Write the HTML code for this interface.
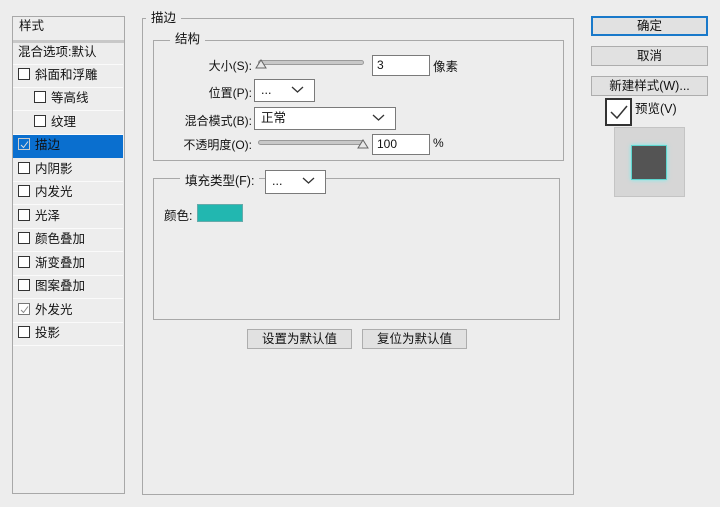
<!DOCTYPE html>
<html><head><meta charset="utf-8"><style>
*{box-sizing:border-box;margin:0;padding:0}
body{width:720px;height:507px;background:#ededed;position:relative;overflow:hidden;font-family:"Liberation Sans","Microsoft YaHei","Noto Sans CJK SC",sans-serif;font-size:12.5px;color:#111}
.a{position:absolute}
.box{position:absolute;border:1px solid #a8a8a8}
.row{position:absolute;left:13px;width:110px;height:23px;border-bottom:1px solid #fafafa;line-height:21px;padding-left:5px;white-space:nowrap}
.cb{display:inline-block;width:12px;height:12px;border:1px solid #333;background:#fff;vertical-align:-1px;margin-right:5px;position:relative}
.lbl{position:absolute;background:#ededed;padding:0 5px;line-height:16px}
.inp{position:absolute;background:#fff;border:1px solid #7a7a7a;height:21px;line-height:19px;padding-left:4px;font-size:12px}
.dd{position:absolute;background:#fff;border:1px solid #7a7a7a;height:23px;line-height:21px;padding-left:6px}
.chev{position:absolute;right:10px;top:5px}
.btn{position:absolute;background:#e1e1e1;border:1px solid #adadad;text-align:center;line-height:18px;height:20px}
.sl{position:absolute;height:5px;background:#c8c8c8;border:1px solid #9a9a9a;border-radius:3px}
</style></head><body>
<div class="box" style="left:12px;top:16px;width:113px;height:478px;background:#ededed"></div>
<div class="a" style="left:19px;top:17px;line-height:18px">样式</div>
<div class="a" style="left:13px;top:40px;width:111px;height:3px;background:#c8c8c8"></div>
<div class="row" style="top:42px">混合选项:默认</div>
<div class="row" style="top:65px"><span class="cb"></span>斜面和浮雕</div>
<div class="row" style="top:88px;padding-left:21px"><span class="cb"></span>等高线</div>
<div class="row" style="top:112px;padding-left:21px"><span class="cb"></span>纹理</div>
<div class="row" style="top:135px;background:#0a6fcf;color:#111;border-bottom:none"><span class="cb" style="background:#0a6fcf;border-color:#ccc"><svg class="a" style="left:1px;top:1px" width="9" height="9"><path d="M1 5 L3.5 7.5 L8 1.5" stroke="#ddd" fill="none" stroke-width="1"/></svg></span>描边</div>
<div class="row" style="top:159px"><span class="cb"></span>内阴影</div>
<div class="row" style="top:182px"><span class="cb"></span>内发光</div>
<div class="row" style="top:206px"><span class="cb"></span>光泽</div>
<div class="row" style="top:229px"><span class="cb"></span>颜色叠加</div>
<div class="row" style="top:253px"><span class="cb"></span>渐变叠加</div>
<div class="row" style="top:276px"><span class="cb"></span>图案叠加</div>
<div class="row" style="top:300px"><span class="cb" style="border-color:#777"><svg class="a" style="left:1px;top:1px" width="9" height="9"><path d="M1 5 L3.5 7.5 L8 1.5" stroke="#888" fill="none" stroke-width="1"/></svg></span>外发光</div>
<div class="row" style="top:323px"><span class="cb"></span>投影</div>

<div class="box" style="left:142px;top:18px;width:432px;height:477px"></div>
<div class="lbl" style="left:146px;top:10px">描边</div>
<div class="box" style="left:153px;top:40px;width:411px;height:121px"></div>
<div class="lbl" style="left:170px;top:31px">结构</div>

<div class="a" style="left:200px;top:57px;width:52px;text-align:right;font-size:12px">大小(S):</div>
<div class="sl" style="left:258px;top:60px;width:106px"></div>
<svg class="a" style="left:255px;top:59px" width="12" height="10"><path d="M1 9 L6 1 L11 9 Z" fill="#e8e8e8" stroke="#666"/></svg>
<div class="inp" style="left:372px;top:55px;width:58px">3</div>
<div class="a" style="left:433px;top:56px">像素</div>

<div class="a" style="left:200px;top:84px;width:52px;text-align:right;font-size:12px">位置(P):</div>
<div class="dd" style="left:254px;top:79px;width:61px">...<svg class="chev" width="13" height="9"><path d="M1 2 L6.5 7 L12 2" stroke="#333" fill="none" stroke-width="1.3"/></svg></div>

<div class="a" style="left:160px;top:112px;width:92px;text-align:right;font-size:12px">混合模式(B):</div>
<div class="dd" style="left:254px;top:107px;width:142px">正常<svg class="chev" width="13" height="9"><path d="M1 2 L6.5 7 L12 2" stroke="#333" fill="none" stroke-width="1.3"/></svg></div>

<div class="a" style="left:160px;top:136px;width:92px;text-align:right;font-size:12px">不透明度(O):</div>
<div class="sl" style="left:258px;top:140px;width:106px"></div>
<svg class="a" style="left:357px;top:139px" width="12" height="10"><path d="M1 9 L6 1 L11 9 Z" fill="#e8e8e8" stroke="#666"/></svg>
<div class="inp" style="left:372px;top:134px;width:58px">100</div>
<div class="a" style="left:433px;top:136px;font-size:12px">%</div>

<div class="box" style="left:153px;top:178px;width:407px;height:142px"></div>
<div class="lbl" style="left:180px;top:173px">填充类型(F):</div>
<div class="dd" style="left:265px;top:170px;width:61px;height:24px">...<svg class="chev" width="13" height="9"><path d="M1 2 L6.5 7 L12 2" stroke="#333" fill="none" stroke-width="1.3"/></svg></div>
<div class="a" style="left:164px;top:205px">颜色:</div>
<div class="a" style="left:197px;top:204px;width:46px;height:18px;background:#22b7b0;border:1px solid #6aa"></div>

<div class="btn" style="left:247px;top:329px;width:105px">设置为默认值</div>
<div class="btn" style="left:362px;top:329px;width:105px">复位为默认值</div>

<div class="btn" style="left:591px;top:16px;width:117px;border:2px solid #1979ca;line-height:16px">确定</div>
<div class="btn" style="left:591px;top:46px;width:117px">取消</div>
<div class="btn" style="left:591px;top:76px;width:117px">新建样式(W)...</div>
<div class="a" style="left:605px;top:98px;width:27px;height:28px;border:2px solid #333;background:#fff"><svg class="a" style="left:2px;top:3px" width="20" height="18"><path d="M2 9 L8 15 L18 3" stroke="#333" fill="none" stroke-width="1.5"/></svg></div>
<div class="a" style="left:635px;top:98px;font-size:12.5px">预览(V)</div>
<div class="a" style="left:614px;top:127px;width:71px;height:70px;background:#d6d6d6;border:1px solid #c4c4c4"></div>
<div class="a" style="left:631px;top:145px;width:36px;height:35px;background:#545454;border:1px solid #5fd6cf;box-shadow:0 0 4px #7ee"></div>
</body></html>
